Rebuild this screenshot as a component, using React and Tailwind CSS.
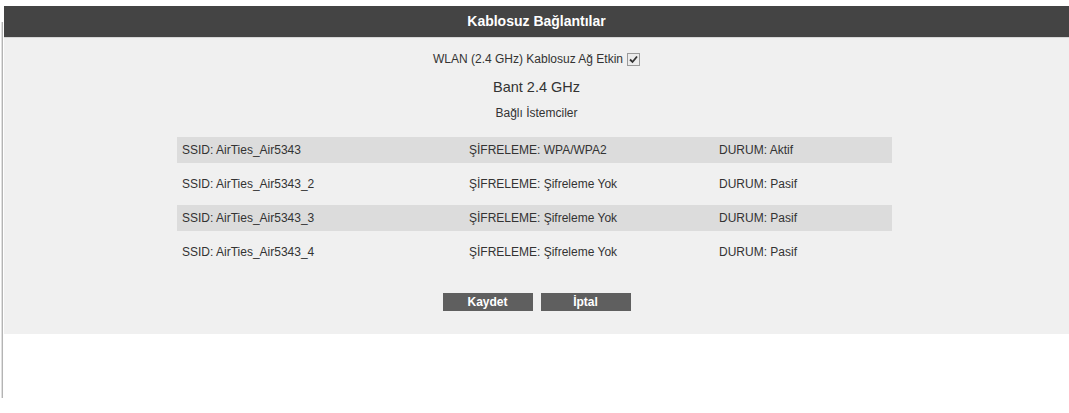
import React from "react";

const rows = [
  { ssid: "AirTies_Air5343", enc: "WPA/WPA2", st: "Aktif", shade: true },
  { ssid: "AirTies_Air5343_2", enc: "Şifreleme Yok", st: "Pasif", shade: false },
  { ssid: "AirTies_Air5343_3", enc: "Şifreleme Yok", st: "Pasif", shade: true },
  { ssid: "AirTies_Air5343_4", enc: "Şifreleme Yok", st: "Pasif", shade: false },
];

export default function App() {
  return (
    <div className="flex h-[413px] w-[1069px] bg-white text-[#333] font-['Liberation_Sans',Arial,sans-serif]">
      <div className="w-[4px] shrink-0">
        <div className="ml-px mt-[22px] h-[376px] w-[2px] border-l border-[#e0e0e0] bg-[#b4b4b4]" />
      </div>
      <div className="flex-1 pt-[6px]">
        <div className="flex h-[31px] items-center justify-center bg-[#444444] text-[14px] font-bold text-white">
          Kablosuz Bağlantılar
        </div>
        <div className="flex h-[297px] flex-col items-center border-t border-[#d6d6d6] bg-[#f0f0f0] pt-[13px] text-[12px]">
          <div className="flex h-[16px] items-center gap-[4px] leading-[16px]">
            <span>WLAN (2.4 GHz) Kablosuz Ağ Etkin</span>
            <span className="flex h-[13px] w-[13px] items-center justify-center border border-[#9a9a9a] bg-[#ececec]">
              <svg width="9" height="9" viewBox="0 0 9 9">
                <path d="M1 4.5 L3.5 7 L8 1.5" fill="none" stroke="#333" strokeWidth="1.8" />
              </svg>
            </span>
          </div>
          <div className="mt-[11px] h-[18px] text-[14.5px] leading-[18px]">Bant 2.4 GHz</div>
          <div className="mt-[9px] h-[16px] leading-[16px]">Bağlı İstemciler</div>
          <div className="mr-[4px] mt-[16px] flex w-[715px] flex-col gap-[8px]">
            {rows.map((r) => (
              <div
                key={r.ssid}
                className={`flex h-[26px] items-center ${r.shade ? "bg-[#dcdcdc]" : ""}`}
              >
                <div className="w-[287px] pl-[5px]">SSID: {r.ssid}</div>
                <div className="w-[250px] pl-[5px]">ŞİFRELEME: {r.enc}</div>
                <div className="flex-1 pl-[5px]">DURUM: {r.st}</div>
              </div>
            ))}
          </div>
          <div className="mt-[28px] flex gap-[8px]">
            <button className="h-[18px] w-[90px] bg-[#5f5f5f] text-[12px] font-bold leading-[18px] text-white">
              Kaydet
            </button>
            <button className="h-[18px] w-[90px] bg-[#5f5f5f] text-[12px] font-bold leading-[18px] text-white">
              İptal
            </button>
          </div>
        </div>
      </div>
    </div>
  );
}
